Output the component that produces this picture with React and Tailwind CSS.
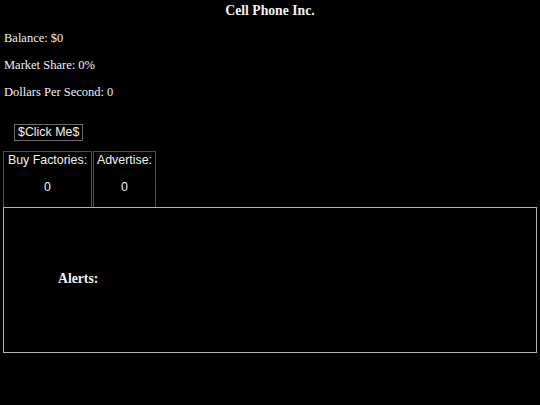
export default function App() {
  return (
    <div className="min-h-[405px] bg-black text-[#f2f2f2] font-['Liberation_Serif',serif] text-[12.5px]">
      <h1 className="pt-[3px] text-center text-[13.7px] font-bold leading-[16px]">Cell Phone Inc.</h1>
      <div className="mt-[12px] flex flex-col gap-[12px] pl-[4px] leading-[15px]">
        <p>Balance: $0</p>
        <p>Market Share: 0%</p>
        <p>Dollars Per Second: 0</p>
      </div>
      <div className="mt-[23px] pl-[14px]">
        <button className="h-[17px] border border-[#6b6b6b] px-[3px] font-['Liberation_Sans',sans-serif] text-[12.4px] leading-[15px]">
          $Click Me$
        </button>
      </div>
      <div className="mt-[9px] flex gap-[1px] pl-[3px] font-['Liberation_Sans',sans-serif] text-[12.4px]">
        <div className="flex h-[56px] w-[89px] flex-col items-center border border-b-0 border-[#4d4d4d] pt-[1px]">
          <span className="leading-[15px]">Buy Factories:</span>
          <span className="mt-[12px] leading-[15px]">0</span>
        </div>
        <div className="flex h-[56px] w-[63px] flex-col items-center border border-b-0 border-[#4d4d4d] pt-[1px]">
          <span className="leading-[15px]">Advertise:</span>
          <span className="mt-[12px] leading-[15px]">0</span>
        </div>
      </div>
      <div className="mx-[3px] flex h-[146px] items-center border border-[#b3b3b3] pl-[54px]">
        <span className="text-[13.7px] font-bold">Alerts:</span>
      </div>
    </div>
  );
}
